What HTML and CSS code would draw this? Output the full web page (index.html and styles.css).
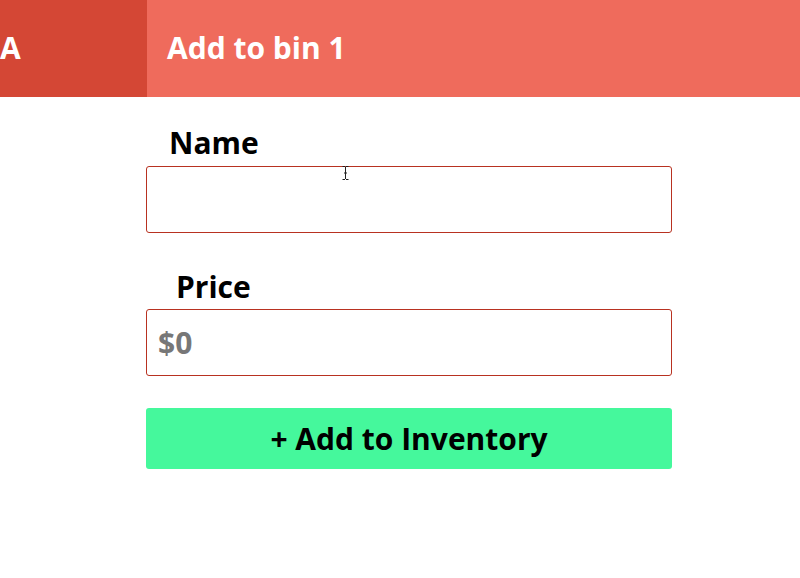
FILE: index.html
```html
<!DOCTYPE html>
<html>
<head>
<meta charset="utf-8">
<link rel="stylesheet" href="styles.css">
</head>
<body>
<header class="topbar">
  <div class="side">A</div>
  <div class="title">Add to bin 1</div>
</header>
<main class="form">
  <label class="label label-name">Name</label>
  <div class="field"></div>
  <label class="label label-price">Price</label>
  <div class="field"><span class="placeholder">$0</span></div>
  <button class="submit">+ Add to Inventory</button>
  <svg class="cursor" width="7" height="14" viewBox="0 0 7 14"><path d="M0.5 0.5h2.5M4 0.5h2.5M3.5 1v12M0.5 13.5h2.5M4 13.5h2.5M2 7h3" stroke="#222" stroke-width="1" fill="none"/></svg>
</main>
</body>
</html>
```
FILE: styles.css
```css
* { box-sizing: border-box; }
body {
  margin: 0;
  font-family: "Open Sans", "Noto Sans", sans-serif;
  font-weight: 700;
  background: #fff;
}
.topbar {
  display: flex;
  height: 97px;
  background: #ef6b5c;
  color: #fff;
}
.side {
  width: 147px;
  background: #d44735;
  font-size: 30px;
  line-height: 95px;
}
.title {
  padding-left: 20px;
  font-size: 30px;
  line-height: 95px;
}
.form {
  position: relative;
  margin-left: 146px;
  width: 526px;
  display: flex;
  flex-direction: column;
}
.label {
  font-size: 30px;
  line-height: 38px;
  color: #000;
}
.label-name { padding-left: 23px; margin-top: 27px; margin-bottom: 4px; }
.label-price { padding-left: 30px; margin-top: 35px; margin-bottom: 3px; }
.field {
  height: 67px;
  border: 1px solid #b83221;
  border-radius: 3px;
  display: flex;
  align-items: center;
  padding-left: 11px;
}
.placeholder {
  color: #777;
  font-size: 30px;
}
.submit {
  margin-top: 32px;
  height: 61px;
  border: 0;
  border-radius: 3px;
  background: #45f89c;
  font-family: inherit;
  font-weight: 700;
  font-size: 30px;
  color: #000;
}
.cursor {
  position: absolute;
  left: 196px;
  top: 69px;
}
```
